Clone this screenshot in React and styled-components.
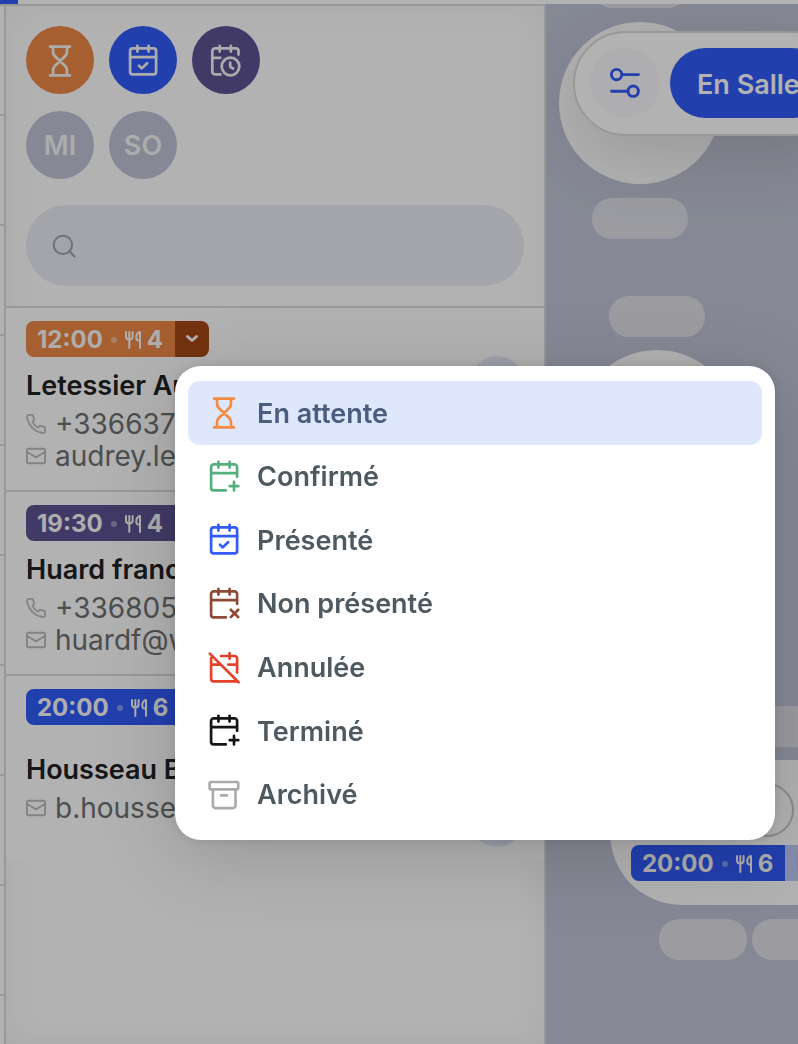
import React, { useState } from "react";
import styled, { createGlobalStyle } from "styled-components";

const GlobalStyle = createGlobalStyle`
  * {
    box-sizing: border-box;
  }
  body {
    margin: 0;
    overflow: hidden;
    background: #fff;
    font-family: Inter, "Liberation Sans", sans-serif;
  }
  button, input {
    font-family: inherit;
    border: none;
    padding: 0;
  }
`;

/* ---------- icons ---------- */

const Icon = ({ children, size = 32 }) => (
  <IconSvg width={size} height={size} viewBox="0 0 32 32" aria-hidden="true">
    {children}
  </IconSvg>
);

const HourglassIcon = () => (
  <Icon>
    <path d="M6 1.6h20M6 30.4h20M9 2v5c0 1.6.6 2.8 1.8 4l10.4 10c1.2 1.2 1.8 2.4 1.8 4v5M23 2v5c0 1.6-.6 2.8-1.8 4L10.8 21c-1.2 1.2-1.8 2.4-1.8 4v5" />
  </Icon>
);

const CalendarCheckIcon = () => (
  <Icon>
    <rect x="3.1" y="3.4" width="26" height="26" rx="2.6" />
    <path d="M10.4 .8v5.8M21.6 .8v5.8M3.1 12.2h26M12 20.7l2.7 2.7 5.4-5.2" />
  </Icon>
);

const CalendarClockIcon = () => (
  <Icon>
    <path d="M10.5 29.4H4.9a2.6 2.6 0 0 1-2.6-2.6V6A2.6 2.6 0 0 1 4.9 3.4h21a2.6 2.6 0 0 1 2.6 2.6v3.6M9.7 .8v5.8M20.9 .8v5.8M2.3 12.8h8" />
    <circle cx="20.5" cy="21.5" r="8.8" />
    <path d="M20.2 17.5v4.3l2.8 1.7" />
  </Icon>
);

const calendarOutline =
  "M17.8 29.4H5.7a2.6 2.6 0 0 1-2.6-2.6V6a2.6 2.6 0 0 1 2.6-2.6h20.8a2.6 2.6 0 0 1 2.6 2.6v9.8M10.4 .8v5.8M21.6 .8v5.8M3.1 12.2h26";

const CalendarPlusIcon = () => (
  <Icon>
    <path d={calendarOutline} />
    <path d="M26 20.9v8.6M21.7 25.2h8.6" />
  </Icon>
);

const CalendarCrossIcon = () => (
  <Icon>
    <path d={calendarOutline} />
    <path d="M22.8 21.7l7.4 7.4M30.2 21.7l-7.4 7.4" />
  </Icon>
);

const CalendarOffIcon = () => (
  <Icon>
    <path d="M1.8 1.6l28.8 28.6M3.1 6.2v20.6a2.6 2.6 0 0 0 2.6 2.6h22.8M13 4h13.5a2.6 2.6 0 0 1 2.6 2.6v14M21.6 1v5.8M3.1 12.6h8.4M20.2 12.6h8.9" />
  </Icon>
);

const ArchiveIcon = () => (
  <Icon>
    <rect x="1.6" y="3" width="28.6" height="7.3" rx="1" />
    <path d="M4.9 10.5v16a2.6 2.6 0 0 0 2.6 2.6h17.4a2.6 2.6 0 0 0 2.6-2.6v-16M13 16.4h6" />
  </Icon>
);

const FilterIcon = () => (
  <Icon>
    <g strokeWidth="2.9">
      <circle cx="7.6" cy="7.6" r="5.2" />
      <circle cx="24.2" cy="24.2" r="5.2" />
      <path d="M13 7.6h16.5M2.6 24.2H19" />
    </g>
  </Icon>
);

const SearchIcon = () => (
  <SmallSvg width="24" height="24" viewBox="0 0 24 24" aria-hidden="true">
    <circle cx="10.9" cy="10.9" r="9.2" />
    <path d="M17.5 17.5l5 5" />
  </SmallSvg>
);

const PhoneIcon = () => (
  <SmallSvg width="20" height="20" viewBox="1 1 22 22" aria-hidden="true">
    <path d="M22 16.92v3a2 2 0 0 1-2.18 2 19.79 19.79 0 0 1-8.63-3.07 19.5 19.5 0 0 1-6-6 19.79 19.79 0 0 1-3.07-8.67A2 2 0 0 1 4.11 2h3a2 2 0 0 1 2 1.72c.127.96.361 1.903.7 2.81a2 2 0 0 1-.45 2.11L8.09 9.91a16 16 0 0 0 6 6l1.27-1.27a2 2 0 0 1 2.11-.45c.907.339 1.85.573 2.81.7A2 2 0 0 1 22 16.92z" />
  </SmallSvg>
);

const MailIcon = () => (
  <SmallSvg width="20" height="20" viewBox="1 1 22 22" aria-hidden="true">
    <rect x="2" y="4" width="20" height="16" rx="2" />
    <path d="M2.5 7.5l9.5 6 9.5-6" />
  </SmallSvg>
);

const CutleryIcon = () => (
  <SmallSvg width="16" height="18" viewBox="0 0 16 18" aria-hidden="true">
    <path d="M1 1v4.500c0 2 1.200 3 3.300 3s3.300-1 3.300-3V1M4.300 1v16M15 17V1c-2.600.6-3.700 3-3.700 5.600 0 1.900.5 2.800 1.700 2.800h2" />
  </SmallSvg>
);

const ChevronIcon = () => (
  <ChevronSvg width="14" height="10" viewBox="0 0 14 10" aria-hidden="true">
    <path d="M2.5 2.5l4.5 4 4.5-4" />
  </ChevronSvg>
);

/* ---------- data ---------- */

const statuses = [
  { id: "waiting", label: "En attente", color: "#f58a42", icon: HourglassIcon },
  { id: "confirmed", label: "Confirmé", color: "#55b07e", icon: CalendarPlusIcon },
  { id: "present", label: "Présenté", color: "#335cfa", icon: CalendarCheckIcon },
  { id: "noshow", label: "Non présenté", color: "#8f4a36", icon: CalendarCrossIcon },
  { id: "cancelled", label: "Annulée", color: "#e3432d", icon: CalendarOffIcon },
  { id: "done", label: "Terminé", color: "#151515", icon: CalendarPlusIcon },
  { id: "archived", label: "Archivé", color: "#ababab", icon: ArchiveIcon },
];

const bookings = [
  {
    time: "12:00",
    guests: 4,
    color: "#ed8947",
    name: "Letessier Au",
    phone: "+336637",
    email: "audrey.le",
    open: true,
  },
  {
    time: "19:30",
    guests: 4,
    color: "#5e5493",
    name: "Huard franc",
    phone: "+336805",
    email: "huardf@w",
  },
  {
    time: "20:00",
    guests: 6,
    color: "#325bf9",
    name: "Housseau B",
    email: "b.housse",
  },
];

const seats = [
  { x: 46, y: -37, w: 96 },
  { x: 46, y: 194, w: 96 },
  { x: 63, y: 292, w: 96 },
  { x: 200, y: 702, w: 96 },
  { x: 113, y: 915, w: 88 },
  { x: 206, y: 915, w: 88 },
];

/* ---------- parts ---------- */

const BookingBadge = ({ time, guests, color, children }) => (
  <Badge>
    <BadgeInfo $color={color}>
      <span>{time}</span>
      <Dot />
      <Guests>
        <CutleryIcon />
        {guests}
      </Guests>
    </BadgeInfo>
    {children}
  </Badge>
);

const StatusMenu = () => {
  const [selected, setSelected] = useState("waiting");
  return (
    <Menu role="menu">
      {statuses.map(({ id, label, color, icon: StatusIcon }) => (
        <MenuItem
          key={id}
          type="button"
          role="menuitem"
          $active={selected === id}
          $color={color}
          onClick={() => setSelected(id)}
        >
          <StatusIcon />
          <span>{label}</span>
        </MenuItem>
      ))}
    </Menu>
  );
};

const Booking = ({ booking }) => (
  <BookingRow>
    <BookingMain>
      <BookingBadge
        time={booking.time}
        guests={booking.guests}
        color={booking.color}
      >
        <Caret type="button" aria-label="Statut">
          <ChevronIcon />
        </Caret>
        {booking.open && <StatusMenu />}
      </BookingBadge>
      <Customer>
        <Name>{booking.name}</Name>
        {booking.phone && (
          <Contact>
            <PhoneIcon />
            <span>{booking.phone}</span>
          </Contact>
        )}
        <Contact>
          <MailIcon />
          <span>{booking.email}</span>
        </Contact>
      </Customer>
    </BookingMain>
    <Actions>
      <ActionButton type="button" aria-label="Modifier" />
      <ActionButton type="button" aria-label="Table" />
    </Actions>
  </BookingRow>
);

const App = () => {
  const [search, setSearch] = useState("");

  return (
    <Page>
      <GlobalStyle />
      <TopBar>
        <ActiveTab />
      </TopBar>
      <Body>
        <Rail>
          {Array.from({ length: 10 }, (_, i) => (
            <RailRow key={i} />
          ))}
        </Rail>
        <Sidebar>
          <SidebarHeader>
            <Filters>
              <FilterButton type="button" aria-label="En attente" $color="#ed8947">
                <HourglassIcon />
              </FilterButton>
              <FilterButton type="button" aria-label="Présenté" $color="#325bf9">
                <CalendarCheckIcon />
              </FilterButton>
              <FilterButton type="button" aria-label="À venir" $color="#5e5493">
                <CalendarClockIcon />
              </FilterButton>
              <FilterButton type="button" $color="#c0c5d6">
                MI
              </FilterButton>
              <FilterButton type="button" $color="#c0c5d6">
                SO
              </FilterButton>
            </Filters>
            <SearchBox>
              <SearchIcon />
              <SearchInput
                type="text"
                aria-label="Rechercher"
                value={search}
                onChange={(e) => setSearch(e.target.value)}
              />
            </SearchBox>
          </SidebarHeader>
          {bookings.map((booking) => (
            <Booking key={booking.time} booking={booking} />
          ))}
        </Sidebar>
        <FloorPlan>
          {seats.map((seat, i) => (
            <Seat key={i} style={{ left: seat.x, top: seat.y, width: seat.w }} />
          ))}
          <RoundTable style={{ left: 13, top: 18 }} />
          <RoundTable style={{ left: 30, top: 346 }} />
          <LargeTable>
            <TableNumber />
            <TableBooking>
              <BookingBadge time="20:00" guests={6} color="#325bf9" />
              <TableGuest>H</TableGuest>
            </TableBooking>
          </LargeTable>
          <Toolbar>
            <SettingsButton type="button" aria-label="Filtres">
              <FilterIcon />
            </SettingsButton>
            <RoomButton type="button">En Salle</RoomButton>
          </Toolbar>
        </FloorPlan>
      </Body>
      <Backdrop />
    </Page>
  );
};

export default App;

/* ---------- styles ---------- */

const IconSvg = styled.svg`
  display: block;
  flex: none;
  overflow: visible;
  fill: none;
  stroke: currentColor;
  stroke-width: 2.7;
  stroke-linecap: round;
  stroke-linejoin: round;
`;

const SmallSvg = styled(IconSvg)`
  stroke-width: 2;
`;

const ChevronSvg = styled(IconSvg)`
  stroke-width: 3;
`;

const Page = styled.div`
  display: flex;
  flex-direction: column;
  height: 100vh;
  overflow: hidden;
`;

const TopBar = styled.div`
  flex: none;
  height: 4px;
  background: #fff;
`;

const ActiveTab = styled.div`
  width: 18px;
  height: 4px;
  background: #325bf9;
`;

const Body = styled.div`
  flex: 1;
  min-height: 0;
  display: flex;
`;

const Rail = styled.div`
  flex: none;
  width: 6px;
  border-top: 2px solid #dadada;
  border-right: 2px solid #dadada;
  overflow: hidden;
`;

const RailRow = styled.div`
  height: 110px;
  border-bottom: 2px solid #dadada;
`;

const Sidebar = styled.aside`
  flex: none;
  width: 540px;
  border-top: 2px solid #dadada;
  border-right: 2px solid #dadada;
  box-shadow: inset 0 0 32px rgba(0, 0, 0, 0.05);
`;

const SidebarHeader = styled.div`
  padding: 20px;
  border-bottom: 2px solid #dadada;
`;

const Filters = styled.div`
  display: flex;
  flex-wrap: wrap;
  gap: 17px 15px;
  width: 240px;
`;

const FilterButton = styled.button`
  display: flex;
  align-items: center;
  justify-content: center;
  width: 68px;
  height: 68px;
  padding-top: 1px;
  border-radius: 50%;
  background: ${(props) => props.$color};
  color: #f6f6f6;
  font-size: 27px;
  font-weight: 600;
`;

const SearchBox = styled.label`
  display: flex;
  align-items: center;
  gap: 16px;
  height: 81px;
  margin-top: 26px;
  padding: 0 26px;
  border-radius: 41px;
  background: #ebedf4;
  color: #9ca3a6;
`;

const SearchInput = styled.input`
  flex: 1;
  min-width: 0;
  background: transparent;
  outline: none;
  color: #202124;
  font-size: 28px;
`;

const BookingRow = styled.article`
  display: flex;
  justify-content: space-between;
  height: 184px;
  padding: 13px 20px 11px;
  border-bottom: 2px solid #dadada;
  background: #fff;

  &:last-child {
    border-bottom-color: #fff;
  }
`;

const BookingMain = styled.div`
  display: flex;
  flex-direction: column;
  align-items: flex-start;
`;

const Badge = styled.div`
  position: relative;
  display: flex;
  flex: none;
  height: 36px;
`;

const BadgeInfo = styled.div`
  display: flex;
  align-items: center;
  gap: 8px;
  padding: 2px 12px 0 11px;
  border-radius: 8px 0 0 8px;
  background: ${(props) => props.$color};
  color: #fafafa;
  font-size: 24px;
  font-weight: 700;
  line-height: 34px;
`;

const Dot = styled.span`
  width: 6px;
  height: 6px;
  border-radius: 50%;
  background: currentColor;
  opacity: 0.4;
`;

const Guests = styled.span`
  display: flex;
  align-items: center;
  gap: 6px;
`;

const Caret = styled.button`
  display: flex;
  align-items: center;
  justify-content: center;
  width: 34px;
  border-radius: 0 8px 8px 0;
  background: #a74917;
  color: #fff;
`;

const Menu = styled.div`
  position: absolute;
  z-index: 20;
  top: 45px;
  right: -566px;
  display: grid;
  grid-auto-rows: 1fr;
  width: 600px;
  height: 474px;
  padding: 15px 13px 14px;
  border-radius: 26px;
  background: #fff;
  box-shadow: 0 0 12px rgba(0, 0, 0, 0.12), 0 16px 80px rgba(0, 0, 0, 0.16);
`;

const MenuItem = styled.button`
  display: flex;
  align-items: center;
  gap: 17px;
  padding: 1px 20px 0;
  border-radius: 12px;
  background: ${(props) => (props.$active ? "#dfe7fd" : "transparent")};
  color: ${(props) => (props.$active ? "#4a5d7d" : "#4e5a60")};
  font-size: 27px;
  font-weight: 600;
  text-align: left;

  svg {
    color: ${(props) => props.$color};
  }
`;

const Customer = styled.div`
  flex: 1;
  display: flex;
  flex-direction: column;
  justify-content: center;
`;

const Name = styled.h3`
  margin: 0;
  color: #202124;
  font-size: 27px;
  font-weight: 600;
  line-height: 44px;
  white-space: nowrap;
`;

const Contact = styled.div`
  display: flex;
  align-items: center;
  gap: 9px;
  height: 32px;
  color: #bcbcbc;

  span {
    color: #6f7172;
    font-size: 28px;
    line-height: 32px;
    white-space: nowrap;
  }
`;

const Actions = styled.div`
  align-self: flex-end;
  display: flex;
  flex-direction: column;
  gap: 15px;
`;

const ActionButton = styled.button`
  width: 54px;
  height: 54px;
  border-radius: 50%;
  background: #e6e9f6;
`;

const FloorPlan = styled.main`
  position: relative;
  flex: 1;
  min-width: 0;
  overflow: hidden;
  background: #c0c5d6;
`;

const Seat = styled.div`
  position: absolute;
  height: 41px;
  border-radius: 20px;
  background: #dedfe6;
`;

const RoundTable = styled.div`
  position: absolute;
  width: 162px;
  height: 162px;
  border-radius: 50%;
  background: #fff;
`;

const LargeTable = styled.div`
  position: absolute;
  left: 64px;
  top: 756px;
  width: 320px;
  height: 145px;
  padding: 23px 21px;
  border-radius: 72px;
  background: #fff;
`;

const TableNumber = styled.div`
  width: 54px;
  height: 54px;
  margin: 0 0 8px 109px;
  border: 2px solid #c8c8c8;
  border-radius: 50%;
`;

const TableBooking = styled.div`
  display: flex;
`;

const TableGuest = styled.span`
  flex: 1;
  padding-left: 11px;
  background: #c1caf5;
  color: #5c6ca6;
  font-size: 24px;
  font-weight: 600;
  line-height: 36px;
`;

const Toolbar = styled.div`
  position: absolute;
  left: 27px;
  top: 27px;
  display: flex;
  align-items: flex-start;
  gap: 10px;
  width: max-content;
  height: 105px;
  padding: 15px;
  border: 2px solid #dadada;
  border-radius: 53px;
  background: #fff;
  box-shadow: 0 20px 72px rgba(50, 30, 40, 0.17);
`;

const SettingsButton = styled.button`
  display: flex;
  align-items: center;
  justify-content: center;
  width: 70px;
  height: 70px;
  border-radius: 50%;
  background: #fafafd;
  color: #325bf9;
`;

const RoomButton = styled.button`
  height: 70px;
  padding: 2px 27px 0;
  border-radius: 35px;
  background: #325bf9;
  color: #fff;
  font-size: 27px;
  font-weight: 600;
`;

const Backdrop = styled.div`
  position: fixed;
  z-index: 10;
  inset: 0;
  background: rgba(0, 0, 0, 0.3);
`;
